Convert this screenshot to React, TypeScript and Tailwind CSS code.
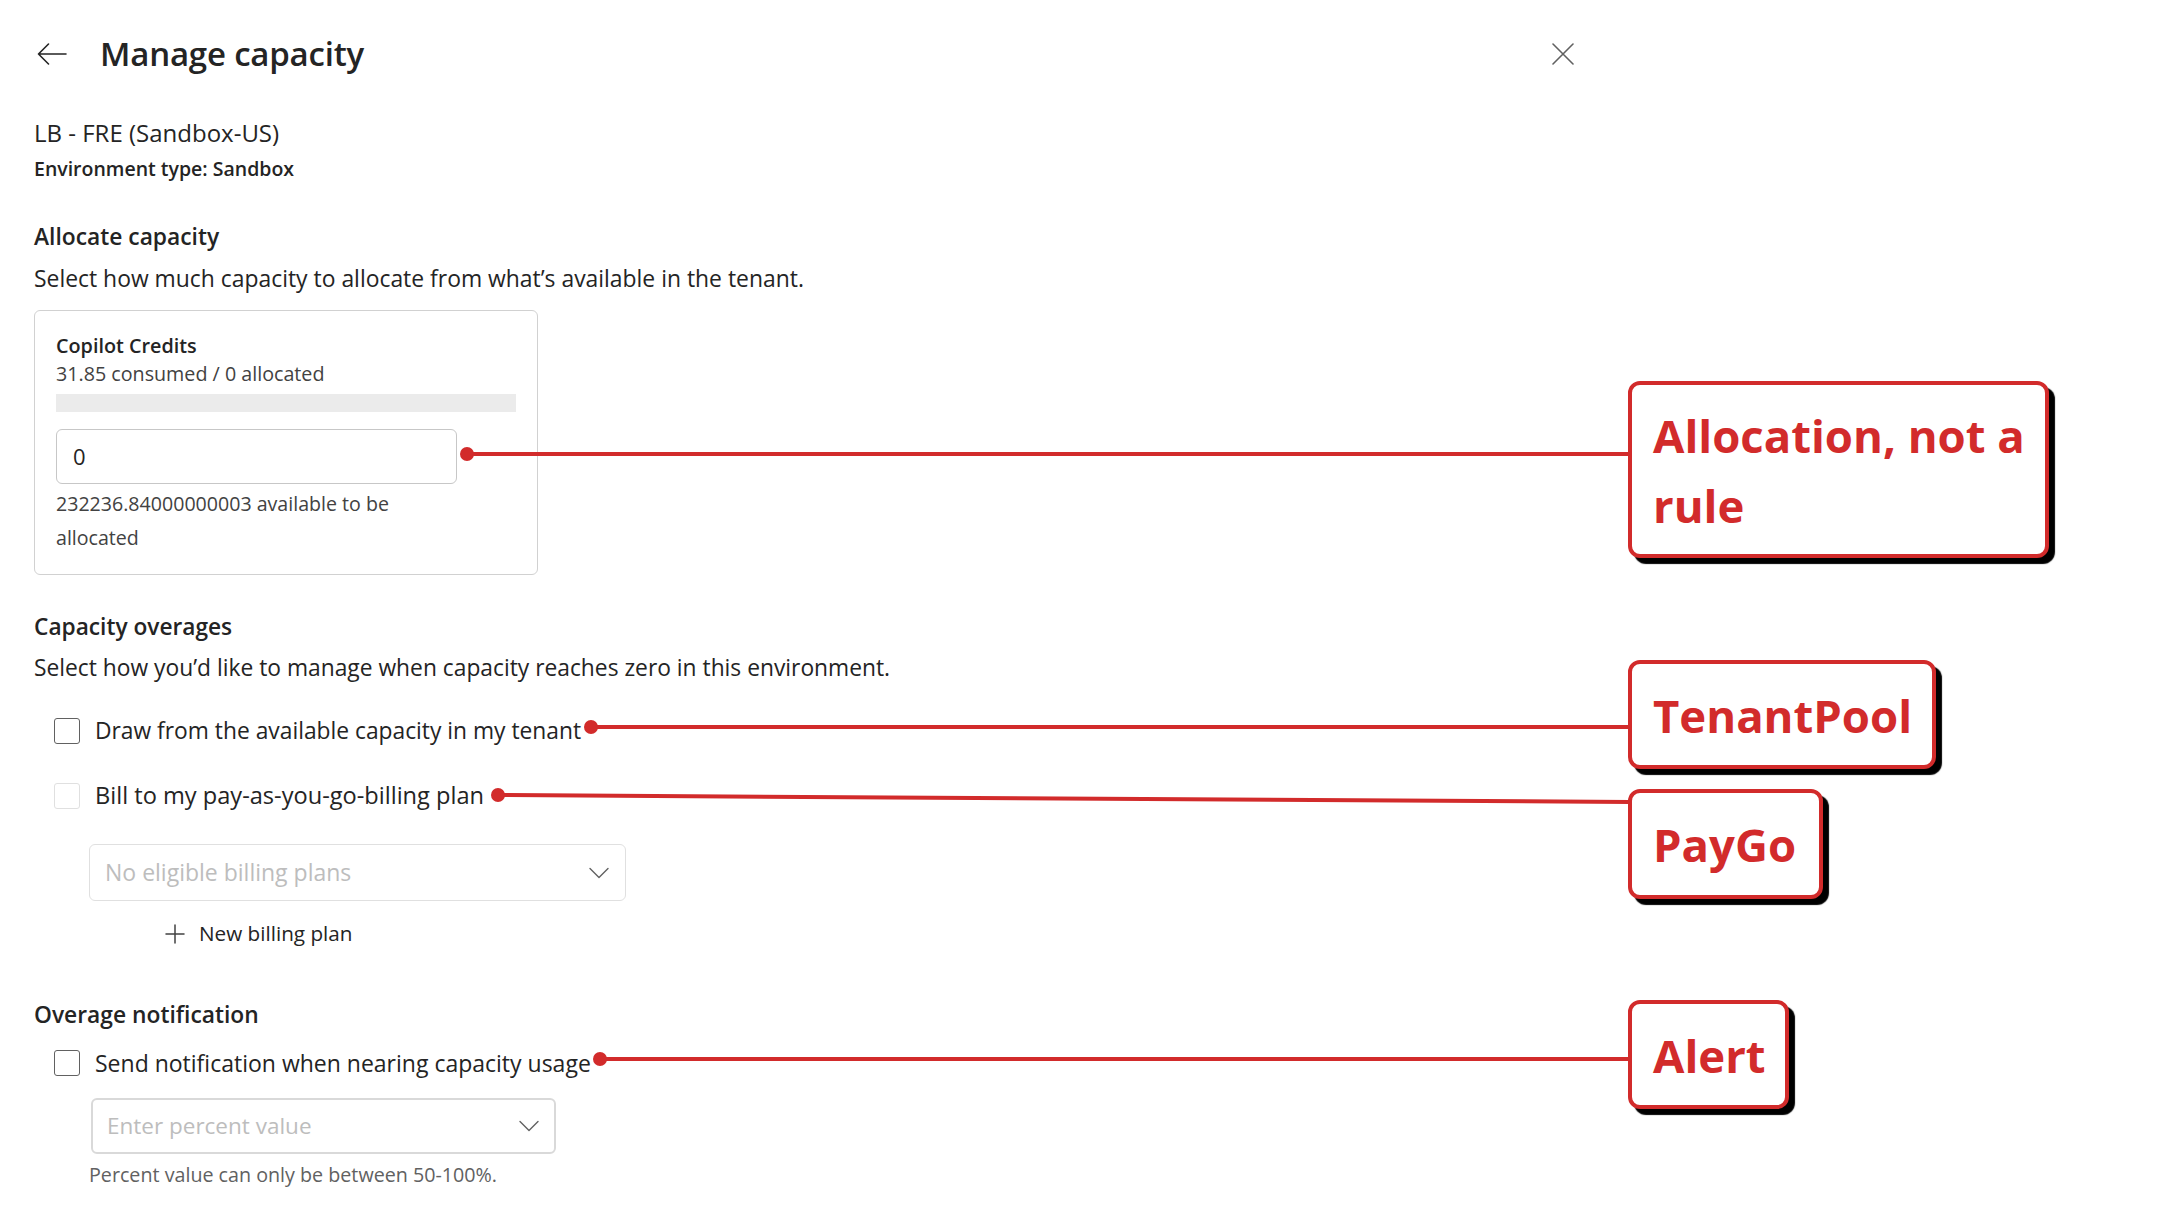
import React from 'react';

const RED = '#d22b2b';

function Checkbox({ disabled }: { disabled?: boolean }) {
  return (
    <span
      className={
        'block w-[26px] h-[26px] rounded-[3px] shrink-0 ' +
        (disabled ? 'border-[1.5px] border-[#e0e0e0]' : 'border-[1.5px] border-[#616161]')
      }
    />
  );
}

function Chevron({ className }: { className?: string }) {
  return (
    <svg viewBox="0 0 20 12" className={className} fill="none">
      <path d="M1 1.5 L10 10.5 L19 1.5" stroke="#616161" strokeWidth="1.4" strokeLinecap="round" strokeLinejoin="round" />
    </svg>
  );
}

function Callout({ top, width, height, children }: { top: number; width: number; height: number; children: React.ReactNode }) {
  return (
    <div
      className="absolute left-[1628px] bg-white border-[4px] border-[#d22b2b] rounded-[12px] shadow-[6px_6px_1px_#000] pl-[21px] flex items-center"
      style={{ top, width, height }}
    >
      <div className="text-[#d22b2b] font-bold text-[45.5px] leading-[70px]">{children}</div>
    </div>
  );
}

function App() {
  return (
    <div className="relative w-[2160px] h-[1227px] bg-white overflow-hidden font-['Open_Sans',sans-serif] text-[#242424]">
      <div className="w-[1620px] pl-[34px] pt-[29px]">
        {/* header */}
        <div className="flex items-center justify-between h-[50px]">
          <div className="flex items-center">
            <svg viewBox="0 0 30 22" className="w-[30px] h-[22px] ml-[3px]" fill="none">
              <path d="M1.5 11 H29 M1.5 11 L11.5 1 M1.5 11 L11.5 21" stroke="#242424" strokeWidth="1.6" strokeLinecap="round" strokeLinejoin="round" />
            </svg>
            <h1 className="ml-[33px] text-[33px] font-semibold leading-[50px] tracking-[-0.2px]">Manage capacity</h1>
          </div>
          <svg viewBox="0 0 22 22" className="w-[22px] h-[22px] mr-[46px]" fill="none">
            <path d="M1 1 L21 21 M21 1 L1 21" stroke="#616161" strokeWidth="1.6" strokeLinecap="round" />
          </svg>
        </div>

        <div className="mt-[38px] text-[24px] leading-[32px]">LB - FRE (Sandbox-US)</div>
        <div className="mt-[6px] text-[19.5px] leading-[28px] font-semibold">Environment type: Sandbox</div>

        {/* allocate */}
        <div className="mt-[39px] text-[22.8px] leading-[30px] font-semibold">Allocate capacity</div>
        <div className="mt-[12px] text-[22.9px] leading-[30px]">
          Select how much capacity to allocate from what’s available in the tenant.
        </div>

        <div className="mt-[16px] w-[504px] border border-[#d1d1d1] rounded-[6px] pt-[21px] pl-[21px] pr-[21px] pb-[19px]">
          <div className="text-[19.8px] leading-[28px] font-semibold">Copilot Credits</div>
          <div className="text-[19.7px] leading-[28px] text-[#424242]">31.85 consumed / 0 allocated</div>
          <div className="mt-[6px] h-[18px] bg-[#ebebeb]" />
          <div className="mt-[17px] w-[401px] h-[55px] border border-[#c7c7c7] rounded-[6px] flex items-center pl-[16px] text-[22px]">
            0
          </div>
          <div className="mt-[3px] w-[401px] text-[19.6px] leading-[34px] text-[#424242]">
            232236.84000000003 available to be
            <br />
            allocated
          </div>
        </div>

        {/* overages */}
        <div className="mt-[37px] text-[22.7px] leading-[30px] font-semibold">Capacity overages</div>
        <div className="mt-[11px] text-[22.8px] leading-[30px]">
          Select how you’d like to manage when capacity reaches zero in this environment.
        </div>

        <div className="mt-[28px] ml-[20px] flex items-center gap-[15px] h-[40px]">
          <Checkbox />
          <span className="text-[22.8px]">Draw from the available capacity in my tenant</span>
        </div>
        <div className="mt-[25px] ml-[20px] flex items-center gap-[15px] h-[40px]">
          <Checkbox disabled />
          <span className="text-[23.6px]">Bill to my pay-as-you-go-billing plan</span>
        </div>

        <div className="mt-[28px] ml-[55px] w-[537px] h-[57px] border border-[#e0e0e0] rounded-[6px] flex items-center justify-between pl-[15px] pr-[16px]">
          <span className="text-[23px] text-[#bdbdbd]">No eligible billing plans</span>
          <Chevron className="w-[20px] h-[12px]" />
        </div>

        <div className="mt-[18px] ml-[131px] flex items-center h-[30px]">
          <svg viewBox="0 0 20 20" className="w-[20px] h-[20px]" fill="none">
            <path d="M10 1 V19 M1 10 H19" stroke="#424242" strokeWidth="1.5" strokeLinecap="round" />
          </svg>
          <span className="ml-[14px] text-[20.7px] font-medium">New billing plan</span>
        </div>

        {/* notification */}
        <div className="mt-[51px] text-[22.8px] leading-[30px] font-semibold">Overage notification</div>
        <div className="mt-[13px] ml-[20px] flex items-center gap-[15px] h-[40px]">
          <Checkbox />
          <span className="text-[23px]">Send notification when nearing capacity usage</span>
        </div>

        <div className="mt-[15px] ml-[57px] w-[465px] h-[56px] border-2 border-[#d9d9d9] rounded-[6px] flex items-center justify-between pl-[14px] pr-[15px]">
          <span className="text-[22.5px] text-[#bdbdbd]">Enter percent value</span>
          <Chevron className="w-[20px] h-[12px]" />
        </div>
        <div className="mt-[8px] ml-[55px] text-[19.7px] leading-[26px] text-[#616161]">
          Percent value can only be between 50-100%.
        </div>
      </div>

      {/* annotation lines */}
      <svg className="absolute left-0 top-0 pointer-events-none" width="2160" height="1227">
        <g stroke={RED} strokeWidth="4" fill={RED}>
          <line x1="467" y1="454" x2="1630" y2="454" />
          <circle cx="467" cy="454" r="7" stroke="none" />
          <line x1="591" y1="727" x2="1630" y2="727" />
          <circle cx="591" cy="727" r="7" stroke="none" />
          <line x1="498" y1="795" x2="1630" y2="802" />
          <circle cx="498" cy="795" r="7" stroke="none" />
          <line x1="600" y1="1059" x2="1630" y2="1059" />
          <circle cx="600" cy="1059" r="7" stroke="none" />
        </g>
      </svg>

      <Callout top={381} width={421} height={177}>
        Allocation, not a
        <br />
        rule
      </Callout>
      <Callout top={660} width={308} height={109}>TenantPool</Callout>
      <Callout top={789} width={195} height={110}>PayGo</Callout>
      <Callout top={1000} width={161} height={109}>Alert</Callout>
    </div>
  );
}

export default App;
